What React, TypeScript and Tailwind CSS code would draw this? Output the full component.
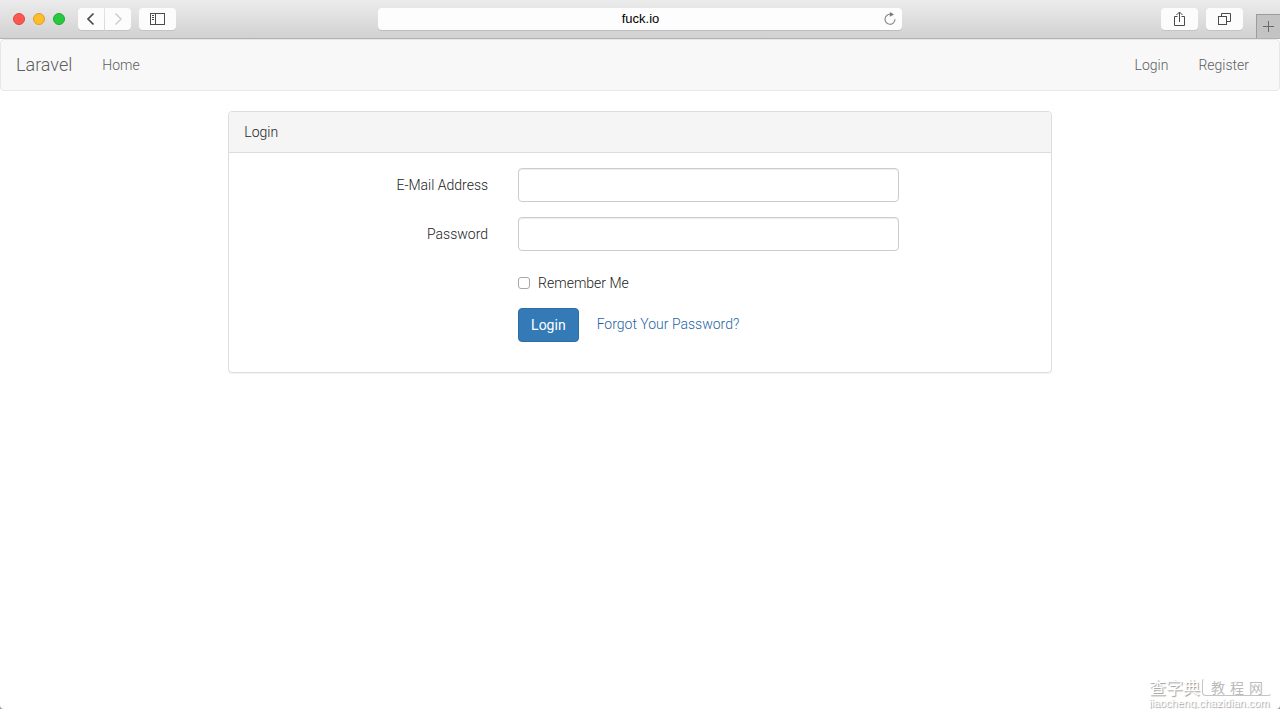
import type { ReactNode } from "react";

const toolButton =
  "flex h-[22px] items-center justify-center bg-[#fcfcfc] text-[#4a4a4a] shadow-[0_1px_0_#c4c4c4]";

function BrowserBar() {
  return (
    <header className="grid h-[39px] grid-cols-[1fr_41%_1fr] border-b border-[#b1b1b1] bg-linear-to-b from-[#ececec] to-[#d1d1d1]">
      <div className="flex items-center pl-[13px]">
        <div className="flex gap-2">
          <span className="size-3 rounded-full border border-[#e2463f] bg-[#fc5753]" />
          <span className="size-3 rounded-full border border-[#dfa023] bg-[#fdbc2c]" />
          <span className="size-3 rounded-full border border-[#1fab2c] bg-[#27c93f]" />
        </div>
        <div className="ml-[13px] flex gap-px">
          <button type="button" aria-label="Back" className={`${toolButton} w-[26px] rounded-l`}>
            <svg width="10" height="14" viewBox="0 0 10 14" fill="none" stroke="currentColor" strokeWidth="1.7">
              <path d="M7.500 1.500 2 7 7.500 12.500" />
            </svg>
          </button>
          <button type="button" aria-label="Forward" className={`${toolButton} w-[26px] rounded-r`}>
            <svg width="10" height="14" viewBox="0 0 10 14" fill="none" stroke="#cfcfcf" strokeWidth="1.5">
              <path d="M2.500 1.500 8 7 2.500 12.500" />
            </svg>
          </button>
        </div>
        <button type="button" aria-label="Show sidebar" className={`${toolButton} ml-2 w-[37px] rounded`}>
          <svg width="15" height="12" viewBox="0 0 15 12" fill="none" stroke="currentColor">
            <rect x=".5" y=".5" width="14" height="11" />
            <path d="M5.5 .5v11M2 2.500h2M2 4.500h2M2 6.500h2" />
          </svg>
        </button>
      </div>

      <div className="flex items-center">
        <div className="flex h-[22px] w-full items-center rounded bg-[#fdfdfd] pr-[5px] pl-5 shadow-[0_1px_0_#bdbdbd]">
          <input
            type="text"
            aria-label="Address"
            defaultValue="fuck.io"
            className="min-w-0 flex-1 bg-transparent text-center font-['Liberation_Sans',Arial,sans-serif] text-[13px] leading-5 text-black outline-none"
          />
          <button type="button" aria-label="Reload">
            <svg width="14" height="14" viewBox="0 0 14 14" fill="none" stroke="#8a8a8a" strokeWidth="1.2">
              <path d="M7.5 2.3A5 5 0 1 0 12 7.3" />
              <path d="M6.8 0 11 2.4 6.8 4.8z" fill="#777" stroke="none" />
            </svg>
          </button>
        </div>
      </div>

      <div className="flex items-center justify-end gap-2">
        <button type="button" aria-label="Share" className={`${toolButton} w-[37px] rounded`}>
          <svg width="13" height="16" viewBox="0 0 13 16" fill="none" stroke="currentColor">
            <path d="M4.5 5.500h-3v9h10v-9h-3M6.5 11V1.200M3.500 4l3-3 3 3" />
          </svg>
        </button>
        <button type="button" aria-label="Show all tabs" className={`${toolButton} w-[37px] rounded`}>
          <svg width="13" height="12" viewBox="0 0 13 12" fill="none" stroke="currentColor">
            <rect x=".5" y="3.5" width="8" height="8" />
            <path d="M3.5 3.5v-3h9v8h-4" />
          </svg>
        </button>
        <button
          type="button"
          aria-label="New tab"
          className="ml-[5px] flex h-6 w-6 items-center justify-center self-end border-t border-l border-[#9c9c9c] bg-[#c3c3c3] text-[#6a6a6a]"
        >
          <svg width="11" height="11" viewBox="0 0 11 11" stroke="currentColor">
            <path d="M5.5 0v11M0 5.5h11" />
          </svg>
        </button>
      </div>
    </header>
  );
}

function Navbar() {
  return (
    <nav className="mb-5 flex h-[52px] items-center rounded border border-[#e7e7e7] bg-[#f8f8f8] pr-[15px] text-[#5e5e5e]">
      <a href="#" className="px-[15px] text-lg leading-5">Laravel</a>
      <a href="#" className="px-[15px]">Home</a>
      <div className="ml-auto flex">
        <a href="#login" className="px-[15px]">Login</a>
        <a href="#register" className="px-[15px]">Register</a>
      </div>
    </nav>
  );
}

function Field({ id, label, type }: { id: string; label: string; type: string }) {
  return (
    <div className="mb-[15px] grid grid-cols-12">
      <label htmlFor={id} className="col-span-4 px-[15px] pt-[7px] text-right">{label}</label>
      <div className="col-span-6 px-[15px]">
        <input
          id={id}
          type={type}
          className="block h-[34px] w-full rounded border border-[#ccc] bg-white px-3 shadow-[inset_0_1px_1px_rgba(0,0,0,0.075)]"
        />
      </div>
    </div>
  );
}

function FormRow({ children }: { children: ReactNode }) {
  return (
    <div className="mb-[15px] grid grid-cols-12">
      <div className="col-span-6 col-start-5 px-[15px]">{children}</div>
    </div>
  );
}

function LoginPanel() {
  return (
    <section className="rounded border border-[#ddd] bg-white shadow-[0_1px_1px_rgba(0,0,0,0.05)]">
      <h1 className="rounded-t border-b border-[#ddd] bg-[#f5f5f5] px-[15px] py-[10px]">Login</h1>
      <form className="py-[15px]" onSubmit={(e) => e.preventDefault()}>
        <Field id="email" label="E-Mail Address" type="email" />
        <Field id="password" label="Password" type="password" />
        <FormRow>
          <div className="flex h-[27px] items-center pt-[7px]">
            <input
              id="remember"
              type="checkbox"
              className="size-3 appearance-none rounded-[3px] border border-[#a8a8a8] bg-white checked:bg-[#337ab7]"
            />
            <label htmlFor="remember" className="pl-2">Remember Me</label>
          </div>
        </FormRow>
        <FormRow>
          <div className="flex">
            <button
              type="submit"
              className="h-[34px] rounded border border-[#2e6da4] bg-[#337ab7] px-3 font-normal text-white"
            >
              Login
            </button>
            <a href="#reset" className="ml-[18px] pt-[6px] text-[#1f64a3]">Forgot Your Password?</a>
          </div>
        </FormRow>
      </form>
    </section>
  );
}

function Watermark() {
  return (
    <div className="absolute right-2 bottom-0 font-['Noto_Sans_CJK_SC',sans-serif] font-normal text-white [text-shadow:1px_1px_1px_#999]">
      <div className="flex items-center">
        <span className="text-[17px] leading-5">查字典</span>
        <span className="ml-[2px] flex gap-[5px] rounded border border-t-transparent border-r-transparent border-[#c4c4c4] px-2 text-sm leading-4 text-[#bbb] [text-shadow:none]">
          <span>教</span>
          <span>程</span>
          <span>网</span>
        </span>
      </div>
      <div className="font-['Liberation_Sans',Arial,sans-serif] text-[11px] leading-3">jiaocheng.chazidian.com</div>
    </div>
  );
}

export default function App() {
  return (
    <div className="min-h-screen bg-[#999]">
      <div className="relative min-h-screen rounded-b bg-white font-['Roboto',sans-serif] text-sm font-light text-[#1c1c1c]">
        <BrowserBar />
        <Navbar />
        <main className="grid grid-cols-12">
          <div className="col-span-8 col-start-3 px-[15px]">
            <LoginPanel />
          </div>
        </main>
        <Watermark />
      </div>
    </div>
  );
}
